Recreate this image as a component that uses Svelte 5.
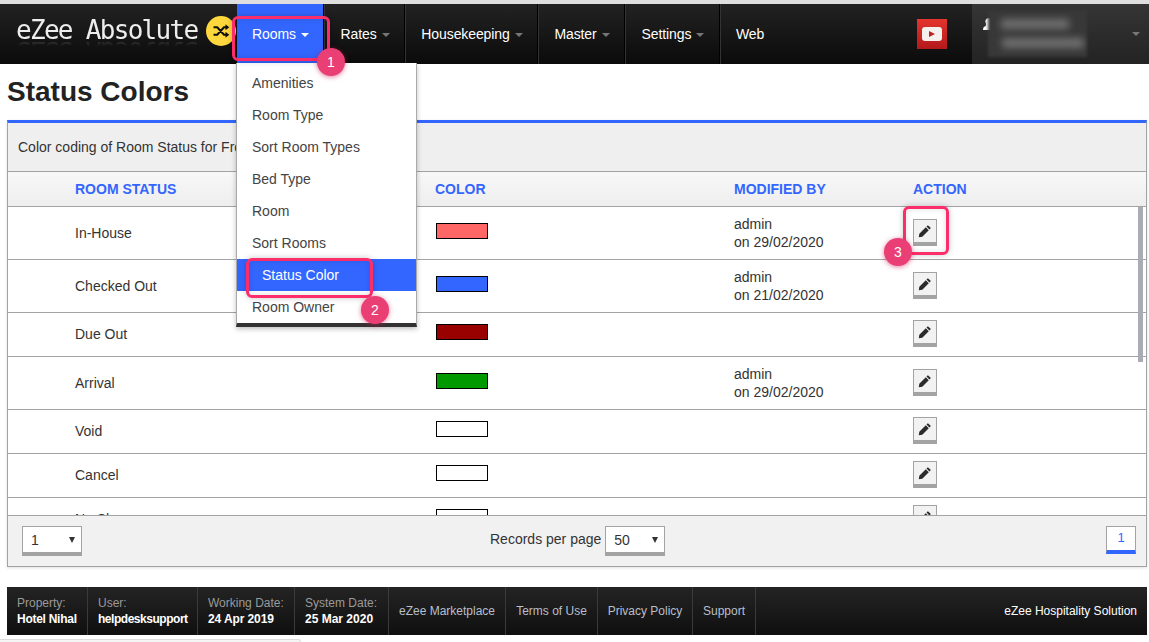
<script>
  const menu = ['Rooms', 'Rates', 'Housekeeping', 'Master', 'Settings'];
  const drop = ['Amenities', 'Room Type', 'Sort Room Types', 'Bed Type', 'Room', 'Sort Rooms', 'Status Color', 'Room Owner'];
  const rows = [
    { name: 'In-House', color: '#ff6666', by: 'admin', on: 'on 29/02/2020', h: 53 },
    { name: 'Checked Out', color: '#3366ff', by: 'admin', on: 'on 21/02/2020', h: 53 },
    { name: 'Due Out', color: '#990000', by: '', on: '', h: 44 },
    { name: 'Arrival', color: '#009900', by: 'admin', on: 'on 29/02/2020', h: 53 },
    { name: 'Void', color: '#ffffff', by: '', on: '', h: 44 },
    { name: 'Cancel', color: '#ffffff', by: '', on: '', h: 44 },
    { name: 'No Show', color: '#ffffff', by: '', on: '', h: 44 }
  ];
  const foot = [
    { l: 'Property:', v: 'Hotel Nihal', w: 80, s: -0.27 },
    { l: 'User:', v: 'helpdesksupport', w: 110, s: -0.47 },
    { l: 'Working Date:', v: '24 Apr 2019', w: 97, s: -0.1 },
    { l: 'System Date:', v: '25 Mar 2020', w: 94, s: 0 }
  ];
  const links = [
    { t: 'eZee Marketplace', w: 117 },
    { t: 'Terms of Use', w: 92 },
    { t: 'Privacy Policy', w: 95 },
    { t: 'Support', w: 63 }
  ];
</script>

<div class="page">
  <header class="nav">
    <div class="brand">
      <span class="logo">eZee Absolute</span>
      <span class="shuffle">
        <svg viewBox="0 0 24 24" width="18" height="18" fill="none" stroke="#111" stroke-width="2.800">
          <path d="M2 7h5l9 10h3M2 17h5l9-10h3" />
          <path d="M18 3l5 4-5 4zM18 13l5 4-5 4z" fill="#111" stroke="none" />
        </svg>
      </span>
    </div>
    {#each menu as m, i}
      <div class="item" class:active={i === 0}>{m}<i class="caret"></i></div>
    {/each}
    <div class="item web">Web</div>
    <div class="yt">
      <span class="yt-box">
        <span class="yt-play"><i></i></span>
      </span>
    </div>
    <div class="user">
      <svg class="person" viewBox="0 0 12 12" width="13" height="13"><path fill="#fff" d="M6 0a3 3 0 0 1 2.500 4.500C8.300 6 8 7 9 7.500 10.500 8 11 9 11 11H1C1 9 1.500 8 3 7.500 4 7 3.700 6 3.500 4.500A3 3 0 0 1 6 0z" /></svg>
      <div class="blur-box">
        <span class="blur-a"></span>
        <span class="blur-b"></span>
      </div>
      <i class="caret user-caret"></i>
    </div>
  </header>

  <h1>Status Colors</h1>

  <section class="panel">
    <div class="caption">Color coding of Room Status for Front Desk</div>
    <div class="thead">
      <span class="c1">ROOM STATUS</span>
      <span class="c2">COLOR</span>
      <span class="c3">MODIFIED BY</span>
      <span class="c4">ACTION</span>
    </div>
    <div class="tbody">
      {#each rows as r}
        <div class="row" style="height: {r.h}px">
          <span class="c1">{r.name}</span>
          <span class="c2"><i class="swatch" style="background: {r.color}"></i></span>
          <span class="c3">{r.by}<br />{r.on}</span>
          <span class="c4">
            <span class="edit">
              <svg viewBox="0 0 16 16" width="14" height="14"><path fill="#2b2b2b" d="M11.300 1.300l3.400 3.400-1.600 1.600-3.400-3.400zM8.900 3.700l3.400 3.400-7.400 7.400-4 .6.600-4z" /></svg>
            </span>
          </span>
        </div>
      {/each}
      <div class="scrollbar"></div>
    </div>
    <div class="pager">
      <div class="select small">1<i class="tri"></i></div>
      <div class="rpp">
        <span>Records per page</span>
        <div class="select mid">50<i class="tri"></i></div>
      </div>
      <div class="pagebtn">1</div>
    </div>
  </section>

  <footer class="foot">
    {#each foot as f}
      <div class="fcell" style="width: {f.w}px">
        <span class="fl">{f.l}</span>
        <b style="letter-spacing: {f.s}px">{f.v}</b>
      </div>
    {/each}
    {#each links as l}
      <div class="flink" style="width: {l.w}px">{l.t}</div>
    {/each}
    <div class="fright">eZee Hospitality Solution</div>
  </footer>
  <div class="stub"></div>

  <ul class="dropdown">
    {#each drop as d}
      <li class:sel={d === 'Status Color'}>{d}</li>
    {/each}
  </ul>

  <div class="mark m1"></div>
  <div class="mark m2"></div>
  <div class="mark m3"></div>
  <div class="num n1">1</div>
  <div class="num n2">2</div>
  <div class="num n3">3</div>
</div>

<style>
  :global(body) {
    margin: 0;
    background: #fff;
  }
  .page {
    position: relative;
    width: 1149px;
    height: 642px;
    overflow: hidden;
    font-family: "Liberation Sans", Arial, sans-serif;
    font-size: 14px;
    color: #333;
    padding-top: 3px;
    box-sizing: border-box;
  }
  .page::before {
    content: "";
    position: absolute;
    left: 0;
    top: 0;
    right: 0;
    height: 4px;
    background: #dfdfdf;
  }
  .nav {
    position: relative;
    margin-top: 1px;
    display: flex;
    height: 60px;
    background: linear-gradient(#222, #0b0b0b);
    color: #fff;
  }
  .brand {
    width: 237px;
    display: flex;
    align-items: center;
    flex: none;
    box-sizing: border-box;
    padding-left: 16px;
    height: 52px;
    white-space: nowrap;
  }
  .logo {
    font-family: "DejaVu Sans Mono", monospace;
    font-size: 26px;
    letter-spacing: -1.7px;
    color: #ededed;
    -webkit-box-reflect: below -9px linear-gradient(transparent 65%, rgba(255, 255, 255, .3));
  }
  .shuffle {
    width: 30px;
    height: 30px;
    border-radius: 50%;
    background: #ffd83d;
    display: flex;
    align-items: center;
    justify-content: center;
    margin-left: 9px;
    margin-top: 2px;
    flex: none;
  }
  .item {
    display: flex;
    align-items: center;
    justify-content: center;
    border-left: 1px solid #333;
    box-shadow: -1px 0 0 #000;
    font-size: 14px;
    letter-spacing: -.1px;
    height: 60px;
    box-sizing: border-box;
    padding: 0;
  }
  .item:nth-of-type(2) { width: 87px; border-left: 0; box-shadow: none; }
  .item:nth-of-type(3) { width: 81px; }
  .item:nth-of-type(4) { width: 133px; }
  .item:nth-of-type(5) { width: 87px; }
  .item:nth-of-type(6) { width: 95px; }
  .item.web { width: 90px; justify-content: flex-start; padding-left: 15px; }
  .item.active {
    background: #3366ff;
  }
  .caret {
    display: inline-block;
    margin-left: 5px;
    margin-top: 2px;
    border-top: 4px solid #777;
    border-left: 4px solid transparent;
    border-right: 4px solid transparent;
  }
  .active .caret { border-top-color: #fff; }
  .yt {
    width: 162px;
    flex: none;
    display: flex;
    align-items: center;
    padding-left: 107px;
    box-sizing: border-box;
    margin-top: -1px;
  }
  .yt-box {
    width: 30px;
    height: 30px;
    background: linear-gradient(#e4342e, #b3191b);
    display: flex;
    align-items: center;
    justify-content: center;
  }
  .yt-play {
    width: 20px;
    height: 14px;
    border-radius: 3px;
    background: #f4f0ee;
    display: flex;
    align-items: center;
    justify-content: center;
  }
  .yt-play i {
    border-left: 6px solid #c0201f;
    border-top: 3.500px solid transparent;
    border-bottom: 3.500px solid transparent;
  }
  .user {
    position: absolute;
    left: 972px;
    top: 0;
    right: 0;
    height: 60px;
    background: linear-gradient(#353535, #232323);
  }
  .person {
    position: absolute;
    left: 10px;
    top: 14px;
  }
  .blur-box {
    position: absolute;
    left: 16px;
    top: 6px;
    width: 99px;
    height: 47px;
    background: #383838;
    filter: blur(1.500px);
    overflow: hidden;
  }
  .blur-a, .blur-b {
    position: absolute;
    height: 10px;
    background: #6f6f6f;
    filter: blur(3.500px);
  }
  .blur-a { left: 13px; top: 9px; width: 68px; }
  .blur-b { left: 14px; top: 28px; width: 82px; }
  .user-caret {
    position: absolute;
    left: 160px;
    top: 28px;
    margin: 0;
  }
  h1 {
    margin: 0;
    font-size: 28px;
    line-height: 32px;
    color: #222;
    font-weight: 700;
    padding: 12px 0 0 7px;
    height: 56px;
    box-sizing: border-box;
  }
  .panel {
    margin: 0 2px 0 7px;
    height: 447px;
    box-sizing: border-box;
    border: 1px solid #a3a3a3;
    border-top: 3px solid #3366ff;
    display: flex;
    flex-direction: column;
    box-shadow: 0 1px 3px rgba(0, 0, 0, .12);
  }
  .caption {
    height: 49px;
    flex: none;
    background: #efefef;
    display: flex;
    align-items: center;
    padding-left: 10px;
    color: #333;
    box-sizing: border-box;
    border-bottom: 1px solid #a3a3a3;
  }
  .thead {
    height: 35px;
    flex: none;
    display: flex;
    align-items: center;
    background: linear-gradient(#f8f8f8, #eeeeee);
    border-bottom: 1px solid #a3a3a3;
    box-sizing: border-box;
    font-weight: 700;
    color: #3366ff;
  }
  .c1 { flex: 0 0 427px; padding-left: 67px; box-sizing: border-box; }
  .c2 { flex: 0 0 299px; }
  .c3 { flex: 0 0 179px; }
  .c4 { flex: 1; }
  .tbody {
    flex: 1;
    position: relative;
    overflow: hidden;
    background: #fff;
  }
  .row {
    display: flex;
    align-items: center;
    border-bottom: 1px solid #a3a3a3;
    box-sizing: border-box;
    line-height: 18px;
  }
  .row .c1 { margin-top: -1px; }
  .row .c2 { display: flex; }
  .row .c3 { margin-top: -1px; }
  .swatch {
    display: block;
    width: 50px;
    height: 14px;
    border: 1px solid #000;
    margin-left: 1px;
    margin-top: -5px;
  }
  .edit {
    display: flex;
    width: 22px;
    height: 22px;
    align-items: center;
    justify-content: center;
    background: #f2f2f2;
    border: 1px solid #a3a3a3;
    border-bottom: 4px solid #a3a3a3;
    margin-top: -2px;
  }
  .scrollbar {
    position: absolute;
    right: 3px;
    top: 0;
    width: 5px;
    height: 155px;
    background: #a9acb5;
  }
  .pager {
    height: 51px;
    flex: none;
    background: #f1f1f1;
    border-top: 1px solid #a3a3a3;
    box-sizing: border-box;
    display: flex;
    align-items: flex-start;
    justify-content: space-between;
    padding: 10px 13px 0 14px;
    position: relative;
  }
  .select {
    position: relative;
    width: 60px;
    height: 30px;
    background: #fff;
    border: 1px solid #a3a3a3;
    border-bottom: 4px solid #a3a3a3;
    box-sizing: border-box;
    line-height: 26px;
    padding-left: 8px;
  }
  .tri {
    position: absolute;
    right: 6px;
    top: 10px;
    border-top: 6px solid #333;
    border-left: 3.500px solid transparent;
    border-right: 3.500px solid transparent;
  }
  .rpp {
    position: absolute;
    left: 482px;
    top: 10px;
    display: flex;
    align-items: flex-start;
    gap: 4px;
    color: #333;
    line-height: 26px;
  }
  .pagebtn {
    position: absolute;
    right: 10px;
    top: 10px;
    width: 30px;
    height: 28px;
    background: #fff;
    border: 1px solid #a3a3a3;
    border-bottom: 4px solid #3366ff;
    box-sizing: border-box;
    text-align: center;
    font-size: 13px;
    line-height: 22px;
    color: #3366ff;
  }
  .foot {
    margin: 20px 2px 0 7px;
    height: 48px;
    display: flex;
    background: linear-gradient(#242424, #0f0f0f);
    color: #fff;
    font-size: 12px;
  }
  .fcell {
    flex: none;
    box-sizing: border-box;
    padding: 8px 0 0 10px;
    border-right: 1px solid #3a3a3a;
    display: flex;
    flex-direction: column;
    line-height: 16px;
  }
  .fcell:first-child { width: 81px !important; }
  .fl { color: #9a9a9a; }
  .fcell b { color: #fff; }
  .flink {
    flex: none;
    box-sizing: border-box;
    border-right: 1px solid #3a3a3a;
    display: flex;
    align-items: center;
    justify-content: center;
    color: #b9bfc9;
  }
  .flink:last-of-type { border-right-color: #000; }
  .fright {
    flex: 1;
    display: flex;
    align-items: center;
    justify-content: flex-end;
    padding-right: 10px;
  }
  .stub {
    position: absolute;
    left: 0;
    top: 639px;
    width: 301px;
    height: 3px;
    border-top: 1px solid #ddd;
    border-right: 1px solid #ddd;
    border-radius: 0 3px 0 0;
    background: #f4f4f4;
    box-sizing: border-box;
  }
  .dropdown {
    position: absolute;
    left: 236px;
    top: 63px;
    width: 181px;
    height: 264px;
    margin: 0;
    padding: 4px 0 0;
    list-style: none;
    background: #fff;
    box-sizing: border-box;
    border: 1px solid #aaa;
    border-top: 0;
    border-bottom: 4px solid #333;
    box-shadow: 0 2px 5px rgba(0, 0, 0, .25);
    z-index: 2;
  }
  .dropdown li {
    height: 32px;
    line-height: 32px;
    padding-left: 15px;
    color: #444;
  }
  .dropdown li.sel {
    background: #3366ff;
    color: #fff;
    padding-left: 25px;
  }
  .mark {
    position: absolute;
    border: 3px solid #fb2d6a;
    border-radius: 6px;
    box-sizing: border-box;
    box-shadow: 0 0 6px rgba(0, 0, 0, .22), inset 0 0 6px rgba(0, 0, 0, .12);
    z-index: 3;
  }
  .m1 { left: 232px; top: 16px; width: 98px; height: 45px; }
  .m2 { left: 246px; top: 258px; width: 127px; height: 40px; }
  .m3 { left: 903px; top: 206px; width: 46px; height: 49px; }
  .num {
    position: absolute;
    width: 28px;
    height: 28px;
    border-radius: 50%;
    background: #ea3f74;
    box-shadow: 0 1px 5px rgba(200, 20, 80, .55);
    color: #fff;
    font-size: 14px;
    text-align: center;
    line-height: 28px;
    z-index: 4;
  }
  .n1 { left: 317px; top: 48px; }
  .n2 { left: 361px; top: 296px; }
  .n3 { left: 884px; top: 238px; }
</style>
